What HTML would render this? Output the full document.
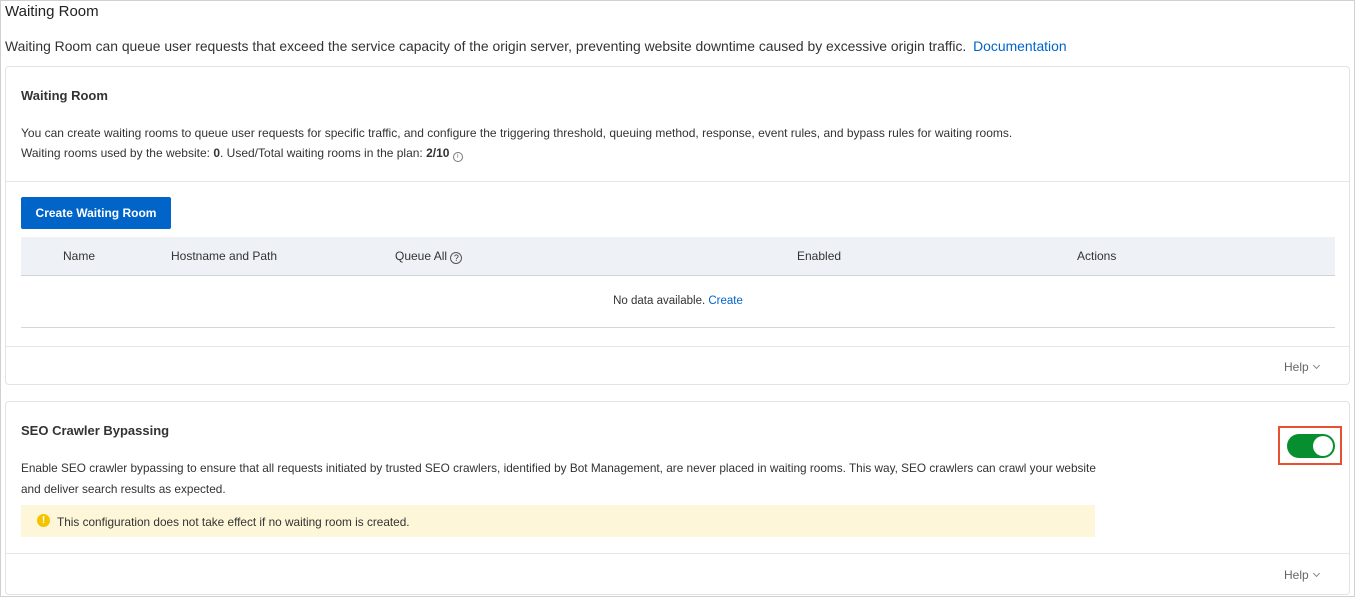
<!DOCTYPE html>
<html><head><meta charset="utf-8"><style>
*{box-sizing:border-box;margin:0;padding:0}
body{width:1355px;height:597px;background:#fff;font-family:"Liberation Sans",sans-serif;color:#333;position:relative;overflow:hidden}
.frame{position:absolute;left:0;top:0;width:1355px;height:597px;border:1px solid #d0d0d0}
.a{position:absolute;white-space:nowrap}
.card{position:absolute;left:5px;width:1345px;border:1px solid #e3e3e3;border-radius:4px;background:#fff}
.hr{position:absolute;left:0;right:0;height:1px;background:#e6e6e6}
.th{position:absolute;top:237px;left:21px;width:1314px;height:39px;background:#eef1f6;border-bottom:1px solid #cfd3d9}
.th span{position:absolute;top:12px;font-size:12px;color:#333;white-space:nowrap}
.help{font-size:12px;color:#666}
.chev{display:inline-block;width:5px;height:5px;border-right:1px solid #888;border-bottom:1px solid #888;transform:rotate(45deg);margin-left:5px;vertical-align:3px}
</style></head><body>
<div class="frame"></div>
<div class="a" style="left:5px;top:3px;font-size:15px;color:#222">Waiting Room</div>
<div class="a" style="left:5px;top:38px;font-size:13.9px;color:#333">Waiting Room can queue user requests that exceed the service capacity of the origin server, preventing website downtime caused by excessive origin traffic. <span style="color:#0064c8;margin-left:3px">Documentation</span></div>

<div class="card" style="top:66px;height:319px">
 <div class="hr" style="top:114px"></div>
 <div class="hr" style="top:279px"></div>
</div>
<div class="a" style="left:21px;top:88px;font-size:13px;font-weight:bold;color:#333">Waiting Room</div>
<div class="a" style="left:21px;top:126px;font-size:12px;color:#333">You can create waiting rooms to queue user requests for specific traffic, and configure the triggering threshold, queuing method, response, event rules, and bypass rules for waiting rooms.</div>
<div class="a" style="left:21px;top:146px;font-size:12px;color:#333">Waiting rooms used by the website: <b>0</b>. Used/Total waiting rooms in the plan: <b>2/10</b> <span style="display:inline-block;width:10px;height:10px;border:1px solid #777;border-radius:50%;font-size:7px;line-height:8px;text-align:center;vertical-align:-1px;color:#777">i</span></div>
<div class="a" style="left:21px;top:197px;width:150px;height:32px;background:#0064c8;border-radius:2px;color:#fff;font-size:12px;font-weight:bold;text-align:center;line-height:32px">Create Waiting Room</div>
<div class="th"><span style="left:42px">Name</span><span style="left:150px">Hostname and Path</span><span style="left:374px">Queue All <span style="position:static;display:inline-block;width:12px;height:12px;border:1px solid #555;border-radius:50%;font-size:9px;line-height:10px;text-align:center;vertical-align:-1px">?</span></span><span style="left:776px">Enabled</span><span style="left:1056px">Actions</span></div>
<div class="a" style="left:21px;top:295px;width:1314px;text-align:center;font-size:11.5px;color:#333">No data available. <span style="color:#0064c8">Create</span></div>
<div class="a" style="left:21px;top:327px;width:1314px;height:1px;background:#d6d6d6"></div>
<div class="a help" style="left:1284px;top:360px">Help<span class="chev"></span></div>

<div class="card" style="top:401px;height:194px">
 <div class="hr" style="top:151px"></div>
</div>
<div class="a" style="left:21px;top:423px;font-size:13px;font-weight:bold;color:#333">SEO Crawler Bypassing</div>
<div class="a" style="left:1278px;top:426px;width:64px;height:39px;border:2px solid #e8502f"></div>
<div class="a" style="left:1287px;top:434px;width:48px;height:24px;border-radius:12px;background:#078f2f"></div>
<div class="a" style="left:1313px;top:436px;width:20px;height:20px;border-radius:50%;background:#fff"></div>
<div class="a" style="left:21px;top:461px;font-size:11.8px;color:#333">Enable SEO crawler bypassing to ensure that all requests initiated by trusted SEO crawlers, identified by Bot Management, are never placed in waiting rooms. This way, SEO crawlers can crawl your website</div>
<div class="a" style="left:21px;top:482px;font-size:11.8px;color:#333">and deliver search results as expected.</div>
<div class="a" style="left:21px;top:505px;width:1074px;height:32px;background:#fdf6d9"></div>
<div class="a" style="left:37px;top:514px;width:13px;height:13px;border-radius:50%;background:#f5c400;color:#fff;font-size:10px;font-weight:bold;text-align:center;line-height:13px">!</div>
<div class="a" style="left:57px;top:515px;font-size:11.8px;color:#333">This configuration does not take effect if no waiting room is created.</div>
<div class="a help" style="left:1284px;top:568px">Help<span class="chev"></span></div>
</body></html>
